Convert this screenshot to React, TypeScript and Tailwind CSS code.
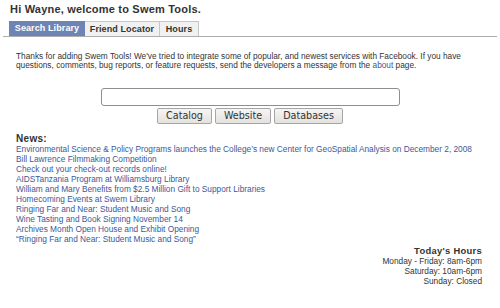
import React, { useState } from 'react'

const news = [
  'Environmental Science & Policy Programs launches the College\u2019s new Center for GeoSpatial Analysis on December 2, 2008',
  'Bill Lawrence Filmmaking Competition',
  'Check out your check-out records online!',
  'AIDSTanzania Program at Williamsburg Library',
  'William and Mary Benefits from $2.5 Million Gift to Support Libraries',
  'Homecoming Events at Swem Library',
  'Ringing Far and Near: Student Music and Song',
  'Wine Tasting and Book Signing November 14',
  'Archives Month Open House and Exhibit Opening',
  '\u201cRinging Far and Near: Student Music and Song\u201d',
]

const tabs = [
  { label: 'Search Library', w: 'w-[76px]' },
  { label: 'Friend Locator', w: 'w-[75px]' },
  { label: 'Hours', w: 'w-[39px]' },
]

const btn =
  'h-[16px] px-[8px] leading-[14px] border border-[#a6a6a6] rounded-[2px] bg-gradient-to-b from-[#f6f5f4] to-[#e4e2df]'

const App = () => {
  const [active, setActive] = useState(0)
  const [query, setQuery] = useState('')

  return (
    <div className="w-[500px] h-[308px] bg-white text-[#333] font-['Liberation_Sans',Arial,sans-serif] overflow-hidden">
      <div className="pl-[10px] pt-[2px] text-[11px] leading-[14px] font-bold tracking-[0.2px]">
        Hi Wayne, welcome to Swem Tools.
      </div>

      {/* tabs */}
      <div className="mx-[3px] mt-[5px] flex pl-[6px] border-b border-[#aeaeae]">
        {tabs.map((t, i) => (
          <button
            key={t.label}
            onClick={() => setActive(i)}
            className={
              i === active
                ? `${t.w} h-[15px] bg-[#6d84b4] text-white text-[9px] leading-[15px] font-bold tracking-[0.1px]`
                : `${t.w} h-[15px] bg-[#f1f1f1] text-[#333] text-[9px] leading-[14px] font-bold tracking-[0.1px] border-t border-r border-[#c6c6c6]`
            }
          >
            {t.label}
          </button>
        ))}
      </div>

      <p className="mt-[15px] px-[16px] text-[8.3px] leading-[9px]">
        Thanks for adding Swem Tools! We&apos;ve tried to integrate some of popular, and newest services with Facebook. If you
        have questions, comments, bug reports, or feature requests, send the developers a message from the{' '}
        <span className="text-[#3b5998]">about</span> page.
      </p>

      {/* search */}
      <div className="mt-[18px] flex flex-col items-center">
        <input
          value={query}
          onChange={(e) => setQuery(e.target.value)}
          className="w-[299px] h-[18px] border border-[#8e8e8e] rounded-[3px] bg-white outline-none"
        />
        <div className="mt-[2px] flex gap-[3px] font-['DejaVu_Sans',sans-serif] text-[9.6px] text-[#333]">
          <button className={btn}>Catalog</button>
          <button className={btn}>Website</button>
          <button className={btn}>Databases</button>
        </div>
      </div>

      {/* news */}
      <div className="mt-[9px] px-[16px]">
        <div className="text-[10px] leading-[11px] font-bold tracking-[0.3px]">News:</div>
        <ul className="text-[8.3px] leading-[10px] text-[#3b5998]">
          {news.map((n) => (
            <li key={n}>
              <a>{n}</a>
            </li>
          ))}
        </ul>
      </div>

      {/* hours */}
      <div className="mt-[2px] pr-[18px] text-right text-[8.3px] leading-[10px]">
        <div className="text-[9.4px] leading-[10px] font-bold tracking-[0.3px]">Today&apos;s Hours</div>
        <div>Monday - Friday: 8am-6pm</div>
        <div>Saturday: 10am-6pm</div>
        <div>Sunday: Closed</div>
      </div>
    </div>
  )
}

export default App
